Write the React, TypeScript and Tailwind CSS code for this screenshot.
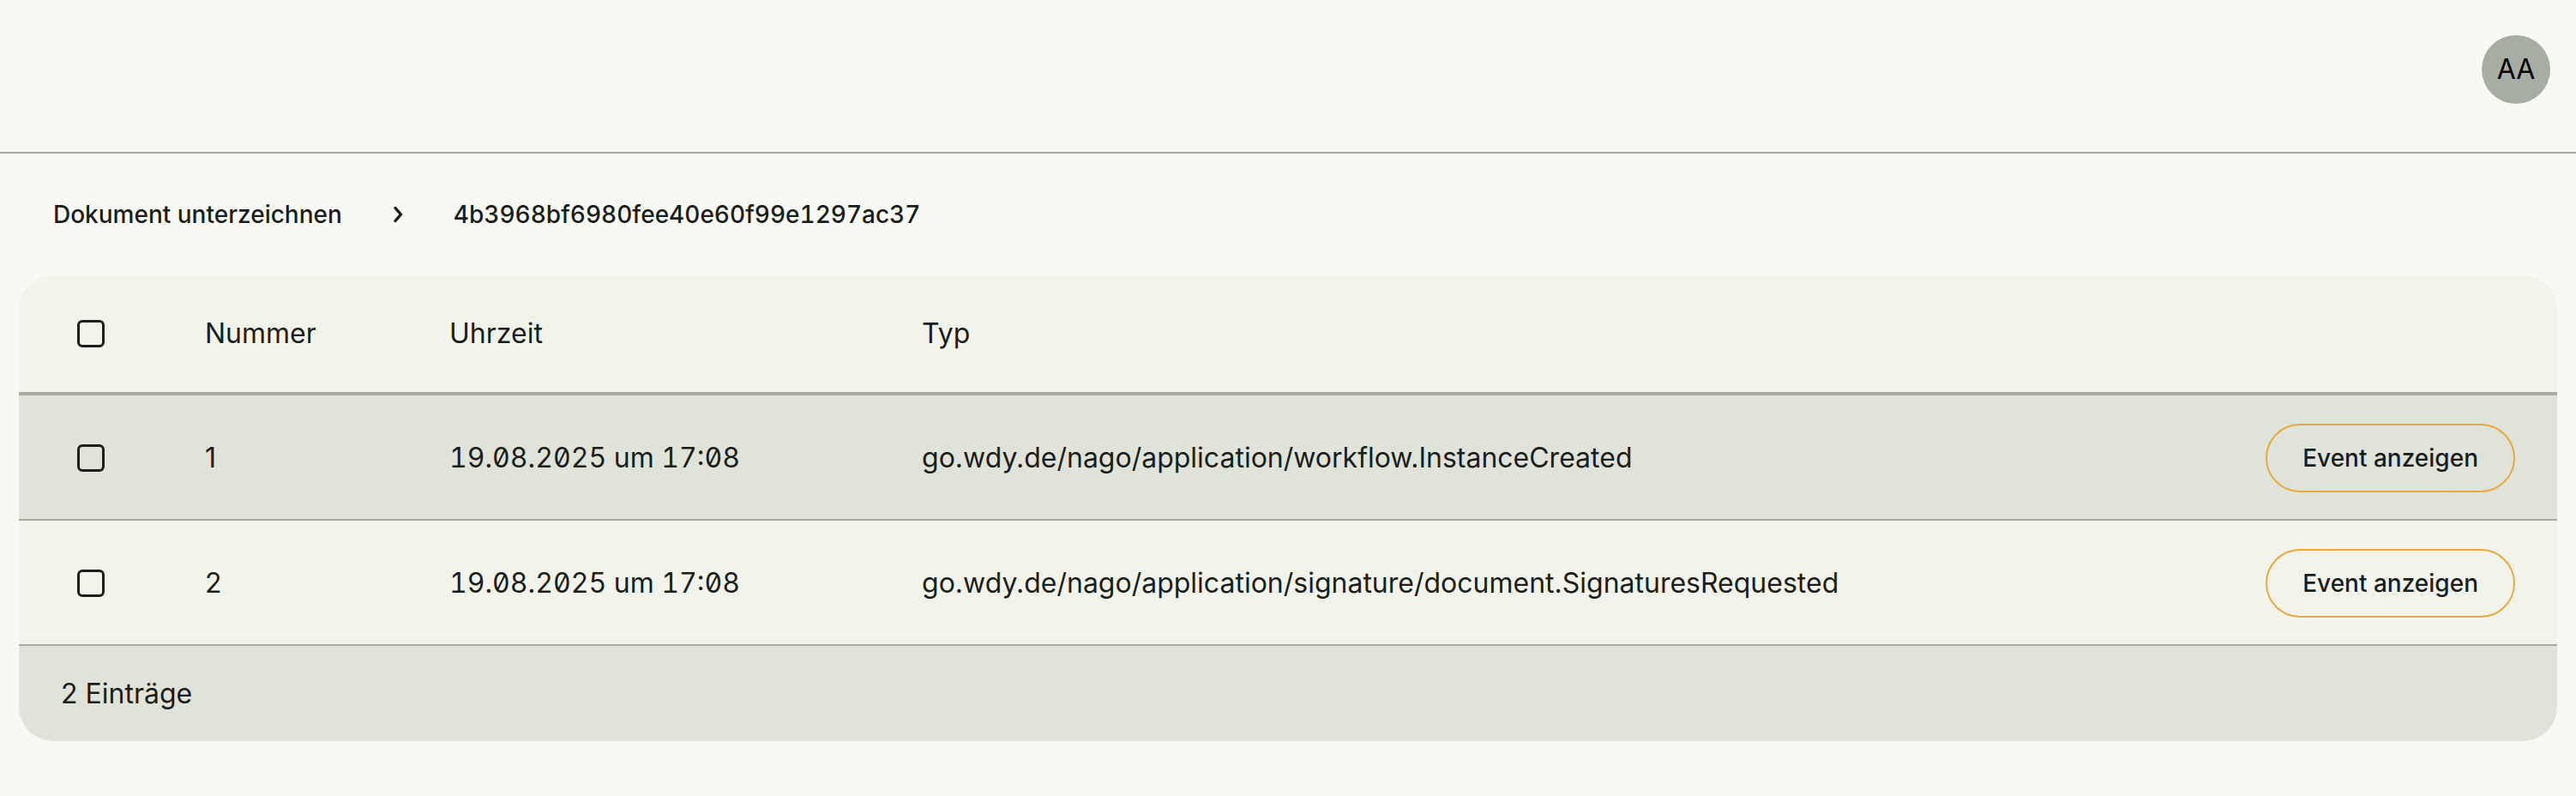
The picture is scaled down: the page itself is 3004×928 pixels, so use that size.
const rows = [
  {
    nr: "1",
    time: "19.08.2025 um 17:08",
    type: "go.wdy.de/nago/application/workflow.InstanceCreated",
    bg: "bg-[#e0e3da]",
  },
  {
    nr: "2",
    time: "19.08.2025 um 17:08",
    type: "go.wdy.de/nago/application/signature/document.SignaturesRequested",
    bg: "bg-[#f2f4ec]",
  },
];

function Checkbox() {
  return (
    <div className="w-[32px] h-[32px] border-[3px] border-[#1c1f1a] rounded-[6px]"></div>
  );
}

function Chevron() {
  return (
    <svg
      width="28"
      height="28"
      viewBox="0 0 28 28"
      fill="none"
      stroke="#1b1d19"
      strokeWidth="3.4"
      strokeLinecap="round"
      strokeLinejoin="round"
    >
      <path d="M10 6.5 L16.5 14 L10 21.5" />
    </svg>
  );
}

export default function App() {
  return (
    <div className="min-h-[928px] w-full bg-[#f8f9f4] text-[#1b1d19] font-['Inter','Noto_Sans',sans-serif]">
      {/* top bar */}
      <header className="h-[179px] border-b-2 border-[#a8aba0] flex justify-end items-start pt-[41px] pr-[30px]">
        <div className="w-[80px] h-[80px] rounded-full bg-[#a8ada3] flex items-center justify-center text-[32px] text-black">
          AA
        </div>
      </header>

      {/* breadcrumb */}
      <nav className="h-[142px] flex items-center pl-[62px] text-[28px] font-medium">
        <span>Dokument unterzeichnen</span>
        <span className="ml-[52px]">
          <Chevron />
        </span>
        <span className="ml-[50px] tabular-nums">4b3968bf6980fee40e60f99e1297ac37</span>
      </nav>

      {/* table */}
      <div className="mx-[22px] rounded-[40px] overflow-hidden text-[32px]">
        <div className="grid grid-cols-[149px_285px_551px_1fr] items-center h-[140px] pl-[68px] pr-[49px] bg-[#f2f4ec] border-b-4 border-[#a8aba0]">
          <Checkbox />
          <span>Nummer</span>
          <span>Uhrzeit</span>
          <span>Typ</span>
        </div>

        {rows.map((r) => (
          <div
            key={r.nr}
            className={`grid grid-cols-[149px_285px_551px_1fr_auto] items-center h-[146px] pl-[68px] pr-[49px] pt-[2px] border-b-2 border-[#a8aba0] ${r.bg}`}
          >
            <Checkbox />
            <span>{r.nr}</span>
            <span className="tabular-nums slashed-zero">{r.time}</span>
            <span>{r.type}</span>
            <button className="h-[80px] px-[41px] rounded-full border-2 border-[#e9a83c] text-[28px] font-medium">
              Event anzeigen
            </button>
          </div>
        ))}

        <div className="h-[111px] flex items-center pl-[49px] bg-[#e0e3da]">
          2 Einträge
        </div>
      </div>
    </div>
  );
}
